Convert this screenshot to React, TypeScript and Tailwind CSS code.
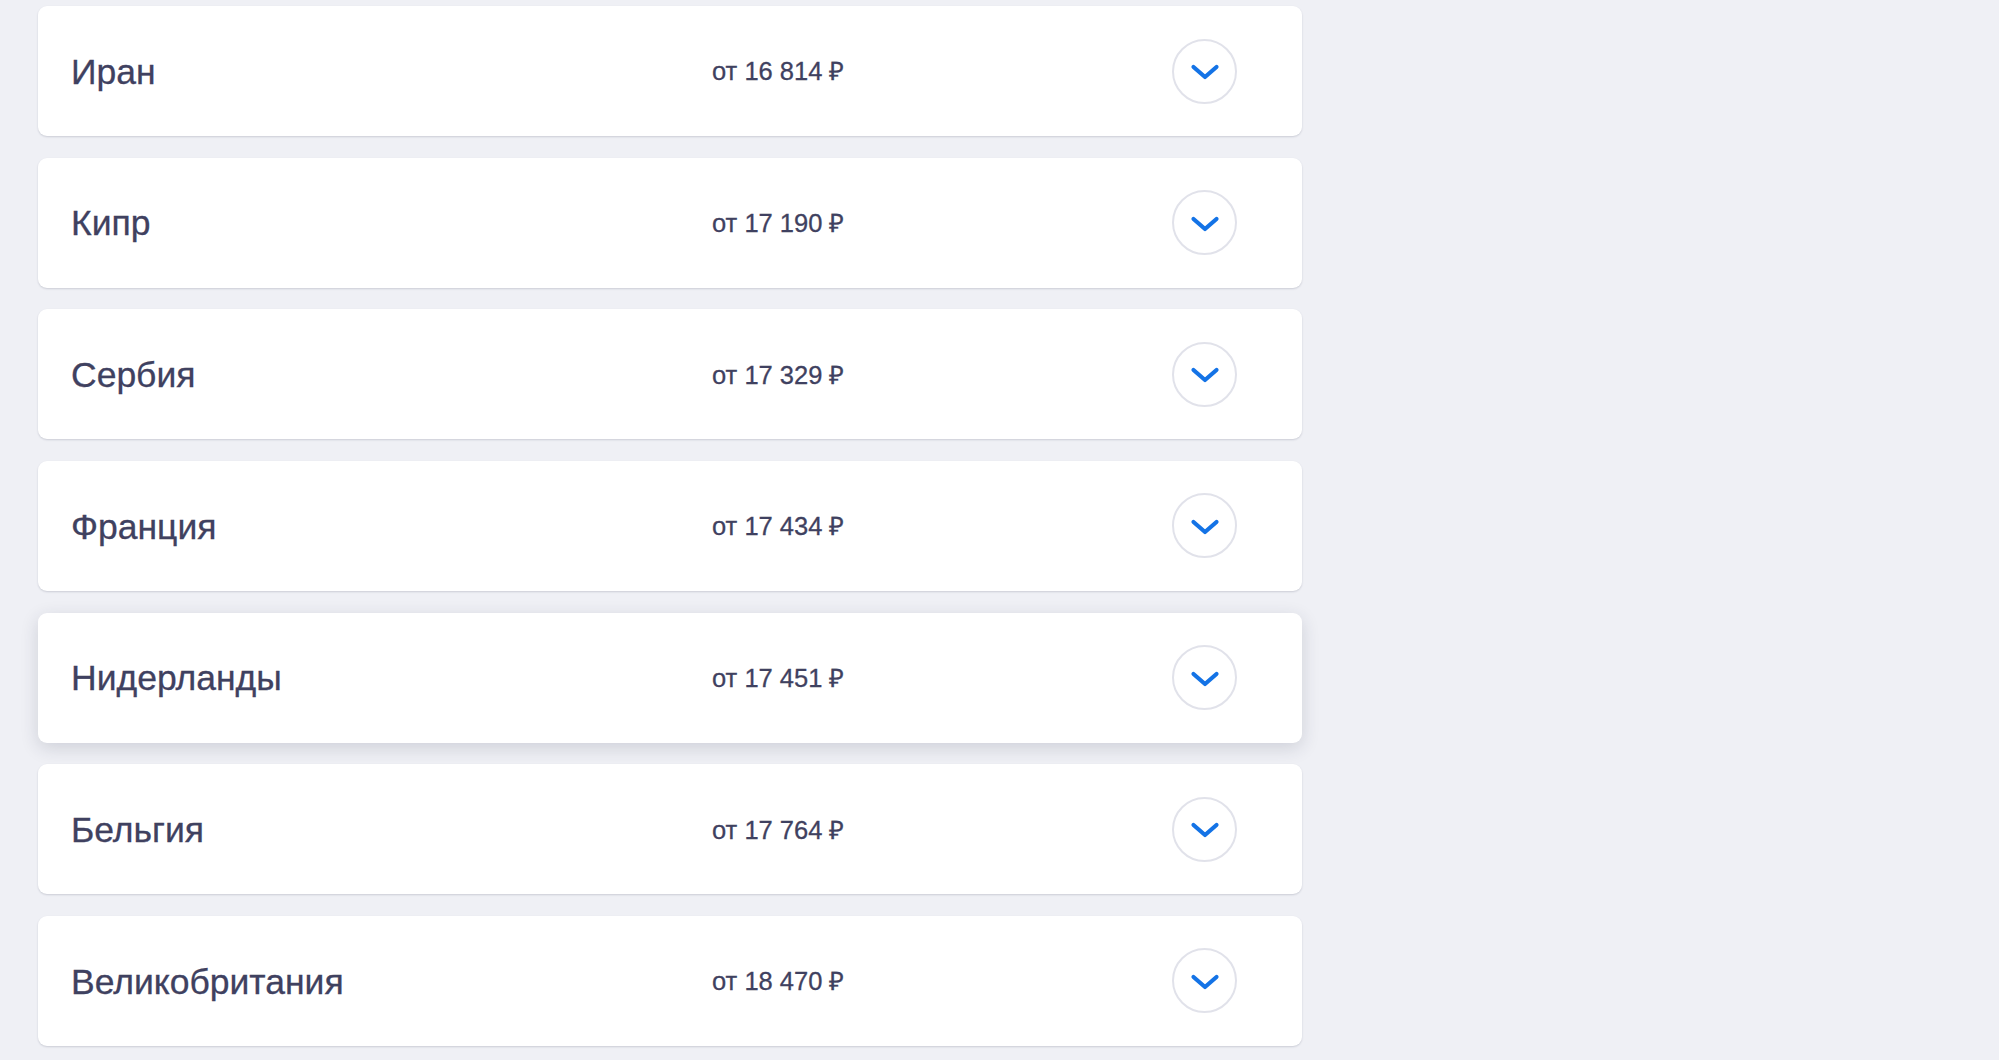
const countries = [
  { name: "Иран", price: "от 16 814 ₽" },
  { name: "Кипр", price: "от 17 190 ₽" },
  { name: "Сербия", price: "от 17 329 ₽" },
  { name: "Франция", price: "от 17 434 ₽" },
  { name: "Нидерланды", price: "от 17 451 ₽", hovered: true },
  { name: "Бельгия", price: "от 17 764 ₽" },
  { name: "Великобритания", price: "от 18 470 ₽" },
];

const Chevron = () => (
  <svg width="30" height="18" viewBox="0 0 30 18" fill="none">
    <path
      d="M3.5 4l11.5 10L26.5 4"
      stroke="#1473e6"
      strokeWidth="4.2"
      strokeLinecap="round"
      strokeLinejoin="round"
    />
  </svg>
);

export default function App() {
  return (
    <div className="min-h-[1060px] w-full bg-[#eff0f5] pl-[38px] pt-[6px] font-['Liberation_Sans',Arial,sans-serif]">
      <div className="flex w-[1264px] flex-col gap-[21.67px]">
        {countries.map((c) => (
          <div
            key={c.name}
            className={`flex h-[130px] items-center rounded-[9px] bg-white pl-[33px] pr-[65px] ${
              c.hovered
                ? "shadow-[0_5px_18px_rgba(40,42,70,0.16)]"
                : "shadow-[0_1px_2px_rgba(40,42,70,0.18)]"
            }`}
          >
            <div className="w-[641px] pt-[3px] text-[35.5px] leading-none text-[#3f4160] [-webkit-text-stroke:0.3px_#3f4160]">
              {c.name}
            </div>
            <div className="flex-1 pt-[2px] text-[25.5px] leading-none text-[#3f4160] [-webkit-text-stroke:0.3px_#3f4160]">
              {c.price}
            </div>
            <button className="flex h-[65px] w-[65px] items-center justify-center rounded-full border-[2.5px] border-[#e1e2ea] bg-white pt-[2px]">
              <Chevron />
            </button>
          </div>
        ))}
      </div>
    </div>
  );
}
